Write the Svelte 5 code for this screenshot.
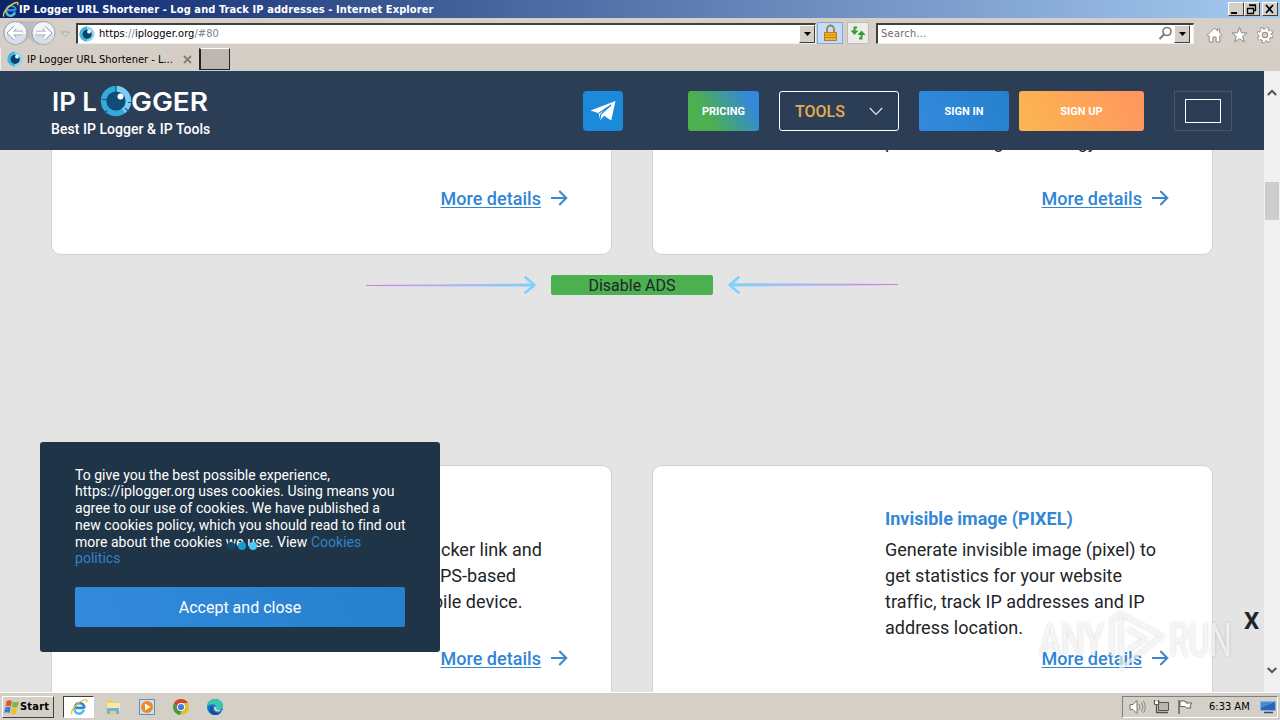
<script>
  const cards = [
    { title: 'Location tracker', lines: ['Generate unique tracker link and', 'find out accurate GPS-based', 'location of any mobile device.'] },
    { title: 'Invisible image (PIXEL)', lines: ['Generate invisible image (pixel) to', 'get statistics for your website', 'traffic, track IP addresses and IP', 'address location.'] }
  ];
</script>

{#snippet eye()}
  <svg class="eye" width="16" height="16" viewBox="0 0 16 16">
    <circle cx="8" cy="8" r="7.6" fill="#8fd8f4" />
    <path d="M8 .4a7.6 7.6 0 0 0 0 15.2z" fill="#45b4e0" />
    <circle cx="8.2" cy="8.3" r="4.6" fill="#0c4168" />
    <circle cx="10" cy="5.7" r="1.9" fill="#eafaff" />
  </svg>
{/snippet}

{#snippet ie(size)}
  <svg class="ie" width={size} height={size} viewBox="0 0 18 18">
    <path d="M14.6 9.9H4.8a4.4 4.4 0 1 1 9.6 0" fill="none" stroke="#2c8bd8" stroke-width="2.6" />
    <path d="M4.6 10a4.6 4.6 0 0 0 9 2" fill="none" stroke="#55b9ee" stroke-width="2.6" />
    <path d="M2 16.5C-.2 13 8 3 15.5 1.6c1.7-.1 1.7 1.4.8 3" fill="none" stroke="#f3c52e" stroke-width="1.4" />
  </svg>
{/snippet}

{#snippet more()}
  <div class="more">
    <span class="link">More details</span>
    <svg width="18" height="18" viewBox="0 0 18 18">
      <path d="M1 9h15M9.3 2l7 7-7 7" fill="none" stroke="#3d86c9" stroke-width="2" />
    </svg>
  </div>
{/snippet}

<div class="screen">
  <div class="titlebar">
    {@render ie(17)}
    <span class="title">IP Logger URL Shortener - Log and Track IP addresses - Internet Explorer</span>
    <div class="winbtns">
      <span class="wb"><svg width="13" height="12"><path d="M2 9h6v2H2z" /></svg></span>
      <span class="wb"><svg width="13" height="12"><path d="M4.5 2.5h6v5h-2M4 2h7M2.5 5.5h6v5h-6zM2 5.5h7" fill="none" stroke="#000" stroke-width="1.3" /></svg></span>
      <span class="wb last"><svg width="13" height="12"><path d="M3 2l7 8M10 2L3 10" stroke="#000" stroke-width="1.7" /></svg></span>
    </div>
  </div>

  <div class="navbar">
    <svg class="arrows" width="72" height="28" viewBox="0 0 72 28">
      <path d="M15 2h27a12 12 0 0 1 0 24q-8 0-12-6h-3q-4 6-12 6a12 12 0 0 1 0-24z" fill="#bdbdc0" />
      <circle cx="15.5" cy="14" r="11.5" fill="#f3f5f9" stroke="#9da1a8" />
      <circle cx="43.5" cy="14" r="11.5" fill="#f3f5f9" stroke="#9da1a8" />
      <path d="M5.5 15h20a10 10 0 0 1-20 0zM33.5 15h20a10 10 0 0 1-20 0z" fill="#d7deea" />
      <path d="M22.5 14H9.5M15 8.5L9.5 14l5.5 5.5" fill="none" stroke="#8f9cb0" stroke-width="4.4" />
      <path d="M22.5 14H9.5M15 8.5L9.5 14l5.5 5.5" fill="none" stroke="#fff" stroke-width="2.8" />
      <path d="M36.5 14h13M44 8.5l5.5 5.5-5.5 5.5" fill="none" stroke="#8f9cb0" stroke-width="4.4" />
      <path d="M36.5 14h13M44 8.5l5.5 5.5-5.5 5.5" fill="none" stroke="#fff" stroke-width="2.8" />
      <path d="M61.5 13h8l-4 4.5z" fill="#ddd9d4" stroke="#aaa6a0" />
    </svg>
    <div class="address">
      {@render eye()}
      <span class="url">https<i>://</i>iplogger.org<i>/#80</i></span>
      <span class="drop"><svg width="7" height="4"><path d="M0 0h7L3.5 4z" /></svg></span>
    </div>
    <div class="lock">
      <svg width="15" height="18" viewBox="0 0 15 18">
        <path d="M4 9V5a3.5 3.5 0 0 1 7 0v4" fill="none" stroke="#a28437" stroke-width="1.8" />
        <path d="M1.5 8.5h12v8h-12z" fill="#efb52c" stroke="#b77c10" />
        <path d="M2 11h11M2 13.5h11" stroke="#c28712" />
      </svg>
    </div>
    <div class="refresh">
      <svg width="16" height="14" viewBox="0 0 16 14">
        <path d="M7 1.5H4.5V5" fill="none" stroke="#2f9c38" stroke-width="2" /><path d="M.5 4.5h8l-4 4.5z" fill="#2f9c38" />
        <path d="M9 12.5h2.5V9" fill="none" stroke="#2f9c38" stroke-width="2" /><path d="M7.5 9h8l-4-4.5z" fill="#2f9c38" />
      </svg>
    </div>
    <div class="search">
      <span class="hint">Search...</span>
      <svg width="15" height="15" viewBox="0 0 15 15"><circle cx="9" cy="5.5" r="4" fill="none" stroke="#7d7d7d" stroke-width="1.7" /><path d="M6 8.5L1.5 13" stroke="#7d7d7d" stroke-width="2.2" /></svg>
      <span class="drop"><svg width="7" height="4"><path d="M0 0h7L3.5 4z" /></svg></span>
    </div>
    <div class="tools">
      <svg width="17" height="18" viewBox="0 0 17 18"><path d="M8.5 2L1 9.3l1.2 1.2 1-.8V16h3.7v-5h3.2v5h3.7V9.7l1 .8L16 9.3l-2.5-2.5V3h-2v2z" fill="#fff" stroke="#8e8b87" /></svg>
      <svg width="17" height="18" viewBox="0 0 17 18"><path d="M8.5 1.5l2 5.3 5.5.2-4.4 3.4 1.6 5.5-4.7-3.2-4.7 3.2 1.6-5.5L1 7l5.5-.2z" fill="#fff" stroke="#8e8b87" /></svg>
      <svg width="18" height="18" viewBox="0 0 18 18">
        <circle cx="9" cy="9" r="6.3" fill="none" stroke="#8e8b87" stroke-width="4" stroke-dasharray="2.7 2.25" />
        <circle cx="9" cy="9" r="4.5" fill="none" stroke="#8e8b87" stroke-width="4.5" />
        <circle cx="9" cy="9" r="6" fill="none" stroke="#fff" stroke-width="3" stroke-dasharray="2 2.71" />
        <circle cx="9" cy="9" r="4.5" fill="none" stroke="#fff" stroke-width="2.6" />
      </svg>
    </div>
  </div>

  <div class="tabs">
    <div class="tab">
      {@render eye()}
      <span>IP Logger URL Shortener - L...</span>
      <svg width="9" height="9"><path d="M1 1l7 7M8 1L1 8" stroke="#858078" stroke-width="2" /></svg>
    </div>
    <div class="newtab"></div>
  </div>

  <div class="view">
    <div class="page">
      <header>
        <div class="brand">
          <svg width="162" height="36" viewBox="0 0 162 36">
            <g class="word">
              <text x="1" y="24.5" textLength="45" lengthAdjust="spacingAndGlyphs">IP L</text>
              <text x="80" y="24.5" textLength="77" lengthAdjust="spacingAndGlyphs">GGER</text>
            </g>
            <circle cx="65" cy="15" r="12.2" fill="none" stroke="#31aadd" stroke-width="6" />
            <path d="M65 2.8a12.2 12.2 0 0 1 7.5 21.8" fill="none" stroke="#7ccdf3" stroke-width="6" />
            <path d="M65 0v6.5M74 22l5 5M50.5 13.5h6M56.5 24.5l-5 4M77 16.500h4" stroke="#1b537c" stroke-width="1.2" />
            <circle cx="65" cy="15" r="9.6" fill="#114b78" />
            <circle cx="69.5" cy="10.5" r="3" fill="#fff" />
          </svg>
          <span class="sub">Best IP Logger &amp; IP Tools</span>
        </div>
        <div class="telegram">
          <svg width="26" height="22" viewBox="0 0 26 22">
            <path d="M.5 10.5L25.5 1l-4.3 19.5-7.2-4.8-3.8 4.5-1.5-7z" fill="#fff" />
            <path d="M8.7 13.2L21 5 10.8 14.3l-.6 5" fill="none" stroke="#1c8adb" stroke-width="1.1" />
          </svg>
        </div>
        <div class="btn pricing">PRICING</div>
        <div class="btn dropdown">
          <span>TOOLS</span>
          <svg width="14" height="9" viewBox="0 0 14 9"><path d="M.8 1L7 7.500 13.200 1" fill="none" stroke="#dfe8f2" stroke-width="1.1" /></svg>
        </div>
        <div class="btn signin">SIGN IN</div>
        <div class="btn signup">SIGN UP</div>
        <div class="lang"><span></span></div>
      </header>

      <div class="cards top">
        <div class="card">{@render more()}</div>
        <div class="card"><p class="cut">phone tracking technology.</p>{@render more()}</div>
      </div>

      <div class="ads">
        <svg width="172" height="20" viewBox="0 0 172 20">
          <defs>
            <linearGradient id="fade"><stop offset="0" stop-color="#c77fe0" /><stop offset=".5" stop-color="#aeb2fb" /><stop offset="1" stop-color="#7fd0fb" /></linearGradient>
          </defs>
          <path d="M0 10l168-1.6v3.2L0 11z" fill="url(#fade)" />
          <path d="M159.5 2.5l9 7.5-9 7.5" fill="none" stroke="#7fd0fb" stroke-width="2.6" stroke-linecap="round" stroke-linejoin="round" />
        </svg>
        <div class="disable">Disable ADS</div>
        <svg class="flip" width="172" height="20" viewBox="0 0 172 20">
          <path d="M0 9l168-.8v3.4L0 10z" fill="url(#fade)" />
          <path d="M159.5 2.5l9 7.5-9 7.5" fill="none" stroke="#7fd0fb" stroke-width="2.6" stroke-linecap="round" stroke-linejoin="round" />
        </svg>
      </div>

      <div class="cards">
        {#each cards as card}
          <div class="card">
            <div class="info">
              <h3>{card.title}</h3>
              {#each card.lines as line}<p>{line}</p>{/each}
            </div>
            {@render more()}
          </div>
        {/each}
      </div>

      <div class="cookie">
        <p>
          To give you the best possible experience,<br />
          https://iplogger.org uses cookies. Using means you<br />
          agree to our use of cookies. We have published a<br />
          new cookies policy, which you should read to find out<br />
          more about the cookies we use. View <span>Cookies<br />
          politics</span>
        </p>
        <div class="accept">Accept and close</div>
      </div>
      <div class="dots"><i></i><i></i><i></i></div>
      <div class="close">X</div>
    </div>

    <div class="scrollbar">
      <svg width="10" height="7" viewBox="0 0 10 7"><path d="M.8 6L5 1.8 9.200 6" fill="none" stroke="#505050" stroke-width="2" /></svg>
      <div class="thumb"></div>
      <svg class="down" width="10" height="7" viewBox="0 0 10 7"><path d="M.8 1L5 5.2 9.200 1" fill="none" stroke="#505050" stroke-width="2" /></svg>
    </div>
  </div>

  <div class="taskbar">
    <div class="start">
      <svg width="16" height="16" viewBox="0 0 16 16">
        <path d="M2.5 2q3-1.5 5.5 0L7 7.5q-3-1.5-5.5 0z" fill="#e2582b" />
        <path d="M9 2.5q3 1.5 6 0L13.5 8q-3 1.3-5.5 0z" fill="#7cb93a" />
        <path d="M1.3 8.5q3-1.5 5.5 0L5.5 14q-3-1.5-5.5 0z" fill="#3a80d2" />
        <path d="M7.7 9q3 1.5 5.5 0L12 14.5q-3 1.5-5.5 0z" fill="#f3bd2e" />
      </svg>
      <b>Start</b>
    </div>
    <div class="active">{@render ie(18)}</div>
    <svg class="task" width="18" height="18" viewBox="0 0 18 18">
      <path d="M2 2h6l1 2h6v12H2z" fill="#e9cd70" /><path d="M3 5h13v8H3z" fill="#f8e9a6" />
      <path d="M3 16v-6h12v6h-3v-3H6v3z" fill="#69b5df" />
    </svg>
    <svg class="task" width="18" height="18" viewBox="0 0 18 18">
      <path d="M1.5 1.5h15v15h-15z" fill="#cfe0f2" stroke="#5c8fc0" />
      <circle cx="9" cy="9" r="6" fill="#f08a1d" /><path d="M7 5.5v7l5.5-3.5z" fill="#fff" />
    </svg>
    <svg class="task" width="18" height="18" viewBox="0 0 18 18">
      <circle cx="9" cy="9" r="8" fill="#e3c02b" />
      <path d="M2.1 5a8 8 0 0 1 13.8 0H9l-3.5 6z" fill="#d9412f" />
      <path d="M2.1 5L6 11.5 9.5 13l-1.5 4A8 8 0 0 1 2.1 5z" fill="#3a9d4b" />
      <circle cx="9" cy="9" r="4" fill="#fff" /><circle cx="9" cy="9" r="3.1" fill="#3e7de8" />
    </svg>
    <svg class="task" width="18" height="18" viewBox="0 0 18 18">
      <circle cx="9" cy="9" r="8" fill="#1675c9" />
      <path d="M1 8.5C1.5 3.5 5 1 9 1c5 0 8 3.5 8 7 0 2.5-2 4-4.5 4-2 0-2.5-1-2-2C11 7 6 4 1 8.5z" fill="#3cc6b0" />
      <path d="M6.5 8C5 12 9 16.5 15 14.3c-3 4-9 3.5-11 0C2.5 11 4.500 8.5 6.5 8z" fill="#124f9e" />
      <path d="M10.5 9c-.8 2 .5 3.5 4 2.7l-.5 1.5c-5 1.5-7-2-5.5-4.7z" fill="#d4d0c8" />
    </svg>
    <div class="tray">
      <svg width="17" height="16" viewBox="0 0 17 16"><path d="M1 5.5h3l4-4v13l-4-4H1z" fill="#fff" stroke="#77736c" /><path d="M10 5q2 3 0 6M12.500 3.500q3 4.500 0 9M14.500 2q3.500 6 0 12" fill="none" stroke="#8b877f" /></svg>
      <svg width="17" height="16" viewBox="0 0 17 16"><path d="M5.500 3.500h10v8h-10z" fill="#b8b6b0" stroke="#55524d" /><path d="M7 13.500h8M1.500 1v4h4V1M3.500 5v8.500H7" fill="none" stroke="#55524d" stroke-width="1.3" /><path d="M2 2.500h3V5H2z" fill="#fff" /></svg>
      <svg width="17" height="16" viewBox="0 0 17 16"><path d="M3 2.500q3-1.500 6 0v1.500h6l-2 3 1 2H9.500L8 7.500H3z" fill="#fff" stroke="#66625c" /><path d="M2 1v14" stroke="#66625c" stroke-width="1.5" /></svg>
      <span class="clock">6:33 AM</span>
      <svg class="desk" width="16" height="14" viewBox="0 0 16 14"><path d="M.5 1.500h15v9H.5z" fill="#2864b8" stroke="#8fb0d8" /><path d="M1 2h14L1 8z" fill="#4a8ada" /><path d="M4 12.500h9" stroke="#3c4c60" stroke-width="1.5" /></svg>
    </div>
  </div>

  <svg class="watermark" width="204" height="70" viewBox="0 0 204 70">
    <text x="3" y="53" textLength="65" lengthAdjust="spacingAndGlyphs">ANY</text>
    <text x="133" y="53" textLength="63" lengthAdjust="spacingAndGlyphs">RUN</text>
    <path d="M83 12l-7 4v37M85 52V11l41 22-41 32V52M92 26l17 10-17 11" />
  </svg>
</div>

<style>
  :global(body) { margin: 0; overflow: hidden; }
  .screen {
    position: relative;
    width: 1280px; height: 720px;
    display: flex; flex-direction: column;
    overflow: hidden;
    background: #d4d0c8;
    font-family: "DejaVu Sans Condensed", "DejaVu Sans", sans-serif;
    font-stretch: condensed;
    font-size: 11px;
    color: #000;
  }
  .screen * { box-sizing: border-box; }
  svg { flex: none; display: block; }
  p, h3 { margin: 0; }

  .titlebar {
    display: flex; align-items: center;
    height: 18px; padding: 0 2px; flex: none;
    background: linear-gradient(90deg, #0a246a, #a6caf0);
    color: #fff;
  }
  .title { font-weight: bold; letter-spacing: 0.09px; white-space: nowrap; }
  .winbtns { display: flex; margin-left: auto; }
  .wb {
    width: 16px; height: 14px; background: #d4d0c8;
    border: 1px solid; border-color: #fff #404040 #404040 #fff;
  }
  .wb.last { margin-left: 2px; }

  .navbar { display: flex; align-items: center; height: 30px; flex: none; background: #d5cfc8; }
  .arrows { margin-right: 4px; }
  .address, .search {
    display: flex; align-items: center;
    height: 21px; background: #fff;
    border: 1px solid; border-color: #404040 #eee #eee #404040;
    border-top-width: 2px; border-left-width: 2px;
  }
  .address { width: 740px; padding-left: 1px; }
  .url { margin-left: 4px; letter-spacing: 0.05px; }
  .url i { font-style: normal; color: #858585; }
  .drop {
    display: flex; align-items: center; justify-content: center;
    width: 16px; height: 18px; margin-left: auto; background: #d4d0c8;
    border: 1px solid; border-color: #fff #404040 #404040 #fff;
  }
  .lock, .refresh { display: flex; align-items: center; justify-content: center; height: 22px; }
  .lock { width: 26px; margin-left: 1px; background: #c5dcf8; border: 1px solid #83a9d8; }
  .refresh { width: 22px; margin-left: 4px; background: #eeece9; border: 1px solid #c0bcb5; }
  .search { width: 318px; margin-left: 7px; padding-left: 3px; color: #6d6d6d; }
  .hint { letter-spacing: 0.25px; }
  .search > svg { margin-left: auto; }
  .search .drop { margin: 0 3px 0 1px; }
  .tools { display: flex; align-items: center; gap: 8px; margin-left: 12px; padding-top: 4px; }

  .tabs { display: flex; height: 23px; flex: none; background: #d5cec7; border-bottom: 1px solid #c9d3dc; }
  .tab { display: flex; align-items: center; width: 199px; padding-left: 6px; border-left: 1px solid #eee; }
  .tab span { margin-left: 4px; padding-top: 1px; white-space: nowrap; }
  .tab > svg:last-child { margin-left: auto; margin-right: 7px; }
  .newtab {
    width: 31px; height: 22px; background: #beb6af;
    border: 1px solid; border-color: #fff #222 #222 #222; border-left-width: 2px;
  }

  .view { display: flex; height: 621px; flex: none; }
  .page {
    position: relative; width: 1264px; overflow: hidden;
    background: #e4e4e4; color: #212529;
    font-family: Roboto, sans-serif; font-stretch: normal; font-size: 18px;
  }
  header {
    position: relative; z-index: 1;
    display: flex; align-items: center;
    height: 79px; padding: 0 32px 0 51px;
    background: #2c3e55; color: #fff;
  }
  .brand { width: 532px; padding-top: 1px; }
  .word { font-family: Inter, sans-serif; font-size: 25.5px; font-weight: 600; fill: #fff; }
  .sub { display: block; font-size: 14px; line-height: 16px; font-weight: 500; letter-spacing: 0.05px; margin-top: -1px; white-space: nowrap; }
  .telegram {
    display: flex; align-items: center; justify-content: center;
    width: 40px; height: 40px; margin-right: 65px;
    border-radius: 4px; background: #1c8adb;
  }
  .btn {
    display: flex; align-items: center; justify-content: center;
    height: 40px; padding-top: 1px; border-radius: 3px;
    font-size: 11px; font-weight: 700;
  }
  .pricing { width: 71px; background: linear-gradient(60deg, #4caf50 30%, #3488dc 85%); }
  .dropdown {
    width: 120px; margin-left: 20px; padding: 1px 15px 0; justify-content: space-between;
    border: 1px solid #fff; color: #e8ab52; font-size: 16px; font-weight: 500;
  }
  .signin { width: 90px; margin-left: 20px; background: linear-gradient(60deg, #338ade, #2680cb); }
  .signup { width: 125px; margin-left: 10px; background: linear-gradient(60deg, #fcb750, #ff945f); }
  .lang {
    display: flex; align-items: center; justify-content: center;
    width: 58px; height: 40px; margin-left: auto;
    border: 1px solid #46566b;
  }
  .lang span { width: 36px; height: 24px; border: 1px solid #fff; }

  .cards { display: grid; grid-template-columns: 561px 561px; gap: 40px; padding-left: 51px; }
  .card {
    position: relative; height: 300px; padding: 40px 43px 0 232px;
    background: #fff; border: 1px solid #d2d2d2; border-radius: 10px;
  }
  .top { margin-top: -80px; }
  .top .card { height: 185px; padding-top: 58px; }
  .top .more { margin-top: 30px; }
  .top .card:first-child .more { margin-top: 56px; }
  .cut { line-height: 26px; }
  .info { height: 136px; line-height: 26px; white-space: nowrap; }
  .info p { letter-spacing: 0.02px; }
  .card:first-child .info p:nth-of-type(2) { word-spacing: 1.2px; }
  h3 { font-size: 18px; line-height: 26px; font-weight: 700; color: #3488d8; margin-bottom: 5px; }
  .more { display: flex; align-items: center; justify-content: flex-end; gap: 9px; height: 26px; }
  .cards:not(.top) .more { margin-top: 3px; }
  .link { color: #3185d5; font-weight: 500; letter-spacing: 0.03px; text-decoration: underline; text-underline-offset: 2px; text-decoration-thickness: 1px; }

  .ads { display: flex; align-items: center; height: 20px; margin: 20px 0 170px 366px; gap: 13px; }
  .disable {
    width: 162px; height: 20px; border-radius: 2px; background: #4caf50;
    font-size: 16px; line-height: 22px; text-align: center;
  }
  .flip { transform: scaleX(-1); }

  .cookie {
    position: absolute; left: 40px; top: 370.5px; z-index: 2;
    width: 400px; height: 210.5px; padding: 25px 35px;
    border-radius: 3px; background: #1f3446; color: #fff;
    font-size: 14px; line-height: 16.8px;
  }
  .cookie p { margin-bottom: 20px; letter-spacing: 0.03px; white-space: nowrap; }
  .cookie span { color: #3283ca; }
  .accept {
    height: 40px; border-radius: 2px; background: linear-gradient(60deg, #338ade, #2680cb);
    font-size: 16px; line-height: 41px; text-align: center;
  }
  .dots { position: absolute; left: 227px; top: 471px; z-index: 3; display: flex; gap: 3px; }
  .dots i { width: 8px; height: 8px; border-radius: 50%; background: #16456b; }
  .dots i:nth-child(2) { background: #149bd0; }
  .dots i:nth-child(3) { background: #4ccaf2; }
  .close { position: absolute; left: 1244px; top: 536px; font-size: 24px; line-height: 28px; font-weight: 700; }

  .scrollbar { display: flex; flex-direction: column; align-items: center; width: 16px; padding: 18px 0; background: #f0f0f0; }
  .thumb { width: 14px; height: 38px; margin-top: 86px; background: #cdcdcd; }
  .down { margin-top: auto; }

  .taskbar { display: flex; align-items: center; height: 28px; flex: none; padding: 1px 2px; border-top: 1px solid #fff; }
  .start {
    display: flex; align-items: center; width: 52px; height: 22px; padding-left: 1px;
    border: 1px solid; border-color: #fff #404040 #404040 #fff;
  }
  .start b { letter-spacing: 0.2px; }
  .active {
    display: flex; align-items: center; justify-content: center;
    width: 31px; height: 22px; margin: 0 10px 0 9px; background: #fff;
    border: 1px solid; border-color: #404040 #fff #fff #404040;
  }
  .task { margin-right: 16px; }
  .tray {
    display: flex; align-items: center; width: 156px; height: 22px;
    margin-left: auto; padding: 0 1px 0 6px; gap: 7px;
    border: 1px solid; border-color: #808080 #fff #fff #808080;
  }
  .clock { margin-left: 8px; white-space: nowrap; }
  .desk { margin-left: auto; }

  .watermark { position: absolute; left: 1036px; top: 603px; z-index: 5; filter: drop-shadow(0 0 1.5px rgba(0,0,0,0.25)); }
  .watermark text { font: 400 46px Roboto, sans-serif; fill: rgba(255,255,255,0.65); }
  .watermark path { fill: none; stroke: rgba(255,255,255,0.65); stroke-width: 3.5; }
</style>
